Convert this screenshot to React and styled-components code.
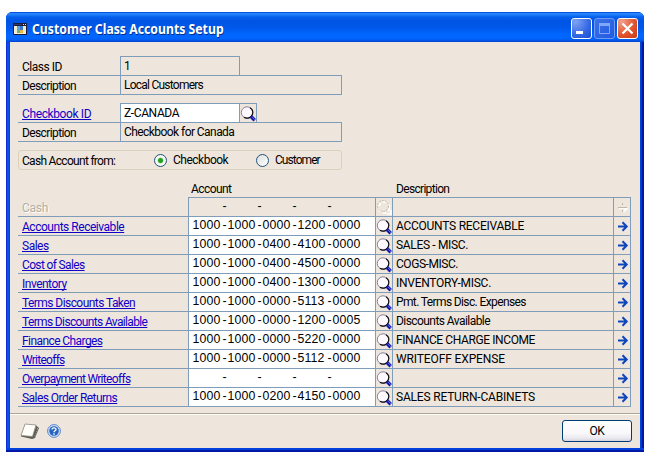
import React from "react";
import styled, { createGlobalStyle, css } from "styled-components";

const LINE = "#7f9db9";
const FACE = "#eee6dd";

const Global = createGlobalStyle`
  * { box-sizing: border-box; }
  body { margin: 0; background: #fff; overflow: hidden; }
`;

const Window = styled.div`
  width: 638px;
  height: 440px;
  margin: 12px 0 0 6px;
  padding: 0 4px 4px;
  border-radius: 6px 6px 0 0;
  background: linear-gradient(90deg, #0a31d8 0 1px, #0a50e8 1px 3px, #0344dc 3px 4px, #0046e0 4px 634px, #0344dc 634px 635px, #0038d8 635px 636px, #0018a0 636px 638px);
  box-shadow: inset 0 -2px 0 #0018a4, inset 0 -4px 0 #0341dc;
  font: 12px/14px Roboto, "Liberation Sans", sans-serif;
  color: #000;
`;

const TitleBar = styled.header`
  display: flex;
  align-items: center;
  height: 30px;
  margin: 0 -4px;
  padding: 3px 6px 0 7px;
  border-radius: 6px 6px 0 0;
  background: linear-gradient(#0453dc 0 1px, #2a8cff 1px, #1c7af8 3px, #0560ec 5px, #0054e3 9px, #0058ea 16px, #0066fe 22px, #0066ff 26px, #005bef 28px, #0042cf 30px);
`;

const Title = styled.h1`
  flex: 1;
  margin: 0 0 0 5px;
  font: bold 14px/20px "Noto Sans", sans-serif;
  transform: scaleX(0.875);
  transform-origin: left;
  white-space: nowrap;
  color: #fff;
  text-shadow: 1px 1px 0 #0a2a8c;
`;

const Captions = styled.div`
  display: flex;
  gap: 2px;
`;

const kinds = {
  normal: css`
    border-color: #fff;
    background: radial-gradient(circle at 20% 15%, #7ea2f4, #3468e4 60%, #1c4ed0);
  `,
  disabled: css`
    border-color: #6f9cf2;
    background: linear-gradient(135deg, #3c72e8, #2259e0);
  `,
  close: css`
    border-color: #fff;
    background: radial-gradient(circle at 20% 15%, #f0a088, #e0512c 60%, #c83c14);
  `,
};

const CaptionButton = styled.button`
  display: block;
  width: 21px;
  height: 21px;
  padding: 0;
  border: 1px solid;
  border-radius: 3px;
  ${(p) => kinds[p.$kind]}
  svg { display: block; }
`;

const Client = styled.main`
  height: 406px;
  padding-top: 15px;
  background: ${FACE};
`;

const Fields = styled.section`
  margin: 0 0 9px 8px;
`;

const Row = styled.div`
  display: flex;
  align-items: flex-end;
  height: 19px;
`;

const Label = styled.div`
  width: ${(p) => p.$width}px;
  height: 19px;
  padding: 3px 0 0 4px;
  border-bottom: 1px solid ${LINE};
  white-space: nowrap;
`;

const Text = styled.span`
  letter-spacing: ${(p) => p.$track || 0}px;
  white-space: pre;
  ${(p) => p.$disabled && "color: #b5b0a0; text-shadow: 1px 1px 0 #fff;"}
`;

const Link = styled(Text).attrs({ as: "a" })`
  color: #1100c8;
  text-decoration: underline;
  text-decoration-thickness: 1px;
  text-underline-offset: 1px;
  text-decoration-skip-ink: none;
`;

const Box = styled.div`
  width: ${(p) => p.$width}px;
  height: 20px;
  padding: 2px 0 0 3px;
  border: 1px solid ${LINE};
  background: ${(p) => (p.$editable ? "#fff" : "transparent")};
  white-space: nowrap;
  & + & { margin-left: -1px; }
`;

const IconBox = styled(Box)`
  display: flex;
  width: 18px;
  padding: 1px 0 0 0;
  margin-left: -1px;
`;

const DescriptionBox = styled(Box)`
  width: 222px;
  margin-left: -1px;
`;

const RadioGroup = styled.fieldset`
  display: flex;
  align-items: center;
  width: 324px;
  min-width: 0;
  height: 20px;
  margin: -1px 0 0 8px;
  padding: 0 0 0 3px;
  border: 1px solid #d9d3bc;
  border-radius: 3px;
`;

const GroupCaption = styled.div`
  flex: 0 0 132px;
  padding-top: 1px;
`;

const Radio = styled.label`
  display: flex;
  flex: 0 0 ${(p) => p.$width}px;
  align-items: center;
  gap: 6px;
`;

const Dot = styled.span`
  width: 13px;
  height: 13px;
  border: 1px solid #21517d;
  border-radius: 50%;
  background: ${(p) =>
    p.$on
      ? "radial-gradient(circle, #21a121 0 2px, #7cc87c 2.6px, #f6f8f4 3.2px)"
      : "linear-gradient(135deg, #dcdfe0, #fff)"};
`;

const Heads = styled.div`
  display: flex;
  height: 28px;
  padding: 12px 0 0 181px;
`;

const Head = styled.div`
  width: ${(p) => p.$width}px;
`;

const Grid = styled.section`
  margin-left: 8px;
`;

const Account = styled.div`
  display: flex;
  margin-top: -1px;
  padding-left: 0.5px;
  font: 12.3px/14px "Liberation Sans", sans-serif;
`;

const Segment = styled.span`
  width: 28px;
  margin-right: 2px;
  letter-spacing: 0.17px;
`;

const Dash = styled.span`
  width: 5px;
`;

const Footer = styled.footer`
  display: flex;
  align-items: center;
  height: 35px;
  margin-top: 6px;
  padding: 2px 8px 0 10px;
  border-top: 1px solid #aca899;
  box-shadow: inset 0 1px 0 #fffdf6;
`;

const FooterIcons = styled.div`
  display: flex;
  flex: 1;
  align-items: center;
  gap: 7px;
  margin-top: -2px;
`;

const OkButton = styled.button`
  width: 70px;
  height: 22px;
  margin-bottom: 2px;
  padding: 0;
  border: 1px solid #003c74;
  border-radius: 3px;
  background: linear-gradient(#fff, #f8f7fa 60%, #eceaf0 85%, #d8d4e0);
  font: 12px/18px Roboto, sans-serif;
  letter-spacing: -0.3px;
  color: #000;
`;

function Magnifier({ disabled }) {
  if (disabled) {
    return (
      <svg width="16" height="17" viewBox="0 0 16 17">
        <circle cx="8" cy="8.500" r="5.500" fill="none" stroke="#fff" strokeWidth="1.700" strokeDasharray="4 2" />
        <circle cx="7" cy="7" r="5.500" fill="none" stroke="#bdb8a6" strokeDasharray="2 1" />
        <path d="M11 15h4v-4" fill="none" stroke="#fff" strokeWidth="1.600" />
      </svg>
    );
  }
  return (
    <svg width="16" height="17" viewBox="0 0 16 17">
      <circle cx="7" cy="7.500" r="5.700" fill="#fdf9ff" stroke="#85809a" />
      <path d="M4 12.300A5.700 5.700 0 0 0 12.500 9.200 5.700 5.700 0 0 0 10 2.700" fill="none" stroke="#111" strokeWidth="1.200" />
      <path d="M11 11.500l3.700 3.700" stroke="#1515a5" strokeWidth="3.400" />
      <path d="M12 11.800l3 3" stroke="#6d78f0" strokeWidth="1" />
    </svg>
  );
}

function Arrow({ disabled }) {
  if (disabled) {
    return (
      <svg width="16" height="17" viewBox="0 0 16 17">
        <path d="M5 9.500h8M9.500 13l4-4" stroke="#fff" fill="none" strokeWidth="1.600" />
        <path d="M4 8.500h9M8.500 4v2M8.500 11v2" stroke="#bdb8a6" fill="none" />
      </svg>
    );
  }
  return (
    <svg width="16" height="17" viewBox="0 0 16 17">
      <path d="M4 8.500h9M8.500 4.300l4.200 4.200-4.200 4.200" stroke="#0d45bd" strokeWidth="2" fill="none" />
    </svg>
  );
}

const ROWS = [
  ["Cash", -0.29, "", "", 0],
  ["Accounts Receivable", -0.47, "1000 1000 0000 1200 0000", "ACCOUNTS RECEIVABLE", -0.26],
  ["Sales", -0.5, "1000 1000 0400 4100 0000", "SALES - MISC.", -0.34],
  ["Cost of Sales", -0.64, "1000 1000 0400 4500 0000", "COGS-MISC.", -0.45],
  ["Inventory", -0.5, "1000 1000 0400 1300 0000", "INVENTORY-MISC.", -0.27],
  ["Terms Discounts Taken", -0.56, "1000 1000 0000 5113 0000", "Pmt. Terms Disc. Expenses", -0.62],
  ["Terms Discounts Available", -0.64, "1000 1000 0000 1200 0005", "Discounts Available", -0.56],
  ["Finance Charges", -0.58, "1000 1000 0000 5220 0000", "FINANCE CHARGE INCOME", -0.4],
  ["Writeoffs", -0.74, "1000 1000 0000 5112 0000", "WRITEOFF EXPENSE", -0.12],
  ["Overpayment Writeoffs", -0.69, "", "", 0],
  ["Sales Order Returns", -0.55, "1000 1000 0200 4150 0000", "SALES RETURN-CABINETS", -0.19],
];

function AccountNumber({ value }) {
  const parts = value ? value.split(" ") : ["", "", "", "", ""];
  return (
    <Account>
      {parts.map((part, i) => (
        <React.Fragment key={i}>
          {i > 0 && <Dash>-</Dash>}
          <Segment>{part}</Segment>
        </React.Fragment>
      ))}
    </Account>
  );
}

export default function App() {
  return (
    <>
      <Global />
      <Window>
        <TitleBar>
          <svg width="14" height="12" viewBox="0 0 14 12">
            <rect width="14" height="12" fill="#1b1b3a" />
            <rect x="1" y="3" width="12" height="8" fill="#f3ead0" />
            <path d="M1 1.500h8" stroke="#38386a" />
            <path d="M10 1.500h3" stroke="#ddd" strokeDasharray="1 1" />
            <path d="M4 3h3v4H4z" fill="#58a8d8" />
            <path d="M7 3h3v4H7z" fill="#3c78d0" />
            <path d="M4 7h3v3H4z" fill="#6ab08c" />
            <path d="M7 7h3v3H7z" fill="#e8b838" />
          </svg>
          <Title>Customer Class Accounts Setup</Title>
          <Captions>
            <CaptionButton $kind="normal">
              <svg width="19" height="19"><path d="M4 13.500h7" stroke="#fff" strokeWidth="3" /></svg>
            </CaptionButton>
            <CaptionButton $kind="disabled">
              <svg width="19" height="19">
                <path d="M4.500 5v9.500h10V5" fill="none" stroke="#7fa8fa" />
                <path d="M4 5.500h11" stroke="#7fa8fa" strokeWidth="3" />
              </svg>
            </CaptionButton>
            <CaptionButton $kind="close">
              <svg width="19" height="19"><path d="M4.500 4.500l10 10M14.500 4.500l-10 10" stroke="#fff" strokeWidth="2.200" /></svg>
            </CaptionButton>
          </Captions>
        </TitleBar>
        <Client>
          <Fields>
            <Row>
              <Label $width={102}><Text $track={-0.47}>Class ID</Text></Label>
              <Box $width={120}><Text>1</Text></Box>
            </Row>
            <Row>
              <Label $width={102}><Text $track={-0.61}>Description</Text></Label>
              <Box $width={222}><Text $track={-0.76}>Local Customers</Text></Box>
            </Row>
          </Fields>
          <Fields>
            <Row>
              <Label $width={102}><Link $track={-0.38}>Checkbook ID</Link></Label>
              <Box $width={120} $editable><Text $track={-0.38}>Z-CANADA</Text></Box>
              <IconBox><Magnifier /></IconBox>
            </Row>
            <Row>
              <Label $width={102}><Text $track={-0.61}>Description</Text></Label>
              <Box $width={222}><Text $track={-0.56}>Checkbook for Canada</Text></Box>
            </Row>
          </Fields>
          <RadioGroup>
            <GroupCaption><Text $track={-0.7}>Cash Account from:</Text></GroupCaption>
            <Radio $width={102}><Dot $on /><Text $track={-0.5}>Checkbook</Text></Radio>
            <Radio $width={70}><Dot /><Text $track={-0.94}>Customer</Text></Radio>
          </RadioGroup>
          <Heads>
            <Head $width={205}><Text $track={-0.58}>Account</Text></Head>
            <Head $width={100}><Text $track={-0.68}>Description</Text></Head>
          </Heads>
          <Grid>
            {ROWS.map(([name, track, number, description, descTrack], i) => {
              const disabled = i === 0;
              return (
                <Row key={name}>
                  <Label $width={170}>
                    {disabled ? <Text $track={track} $disabled>{name}</Text> : <Link $track={track}>{name}</Link>}
                  </Label>
                  <Box $width={188} $editable={!disabled}><AccountNumber value={number} /></Box>
                  <IconBox><Magnifier disabled={disabled} /></IconBox>
                  <DescriptionBox><Text $track={descTrack}>{description}</Text></DescriptionBox>
                  <IconBox><Arrow disabled={disabled} /></IconBox>
                </Row>
              );
            })}
          </Grid>
          <Footer>
            <FooterIcons>
              <svg width="20" height="17" viewBox="0 0 20 17">
                <path d="M5 2l11 .5 3 2.500-4 10-3 1-11-2.500z" fill="#5c5c54" />
                <path d="M5 1l11 1-3.500 11.500L1 12.500z" fill="#fffef8" stroke="#8c887c" strokeWidth=".8" />
                <path d="M15 5l3 .5-3.500 8.500" fill="none" stroke="#a8a498" strokeDasharray="1 1" />
              </svg>
              <svg width="14" height="14" viewBox="0 0 14 14">
                <circle cx="7" cy="7" r="6.400" fill="#d6e4f8" stroke="#5487cf" />
                <circle cx="7" cy="7" r="4.800" fill="#2763c0" />
                <path d="M5 5.600c0-2.300 4-2.300 4-.2 0 1.400-2 1.400-2 2.800M7 9.300v1.400" fill="none" stroke="#fff" strokeWidth="1.400" />
              </svg>
            </FooterIcons>
            <OkButton>OK</OkButton>
          </Footer>
        </Client>
      </Window>
    </>
  );
}
